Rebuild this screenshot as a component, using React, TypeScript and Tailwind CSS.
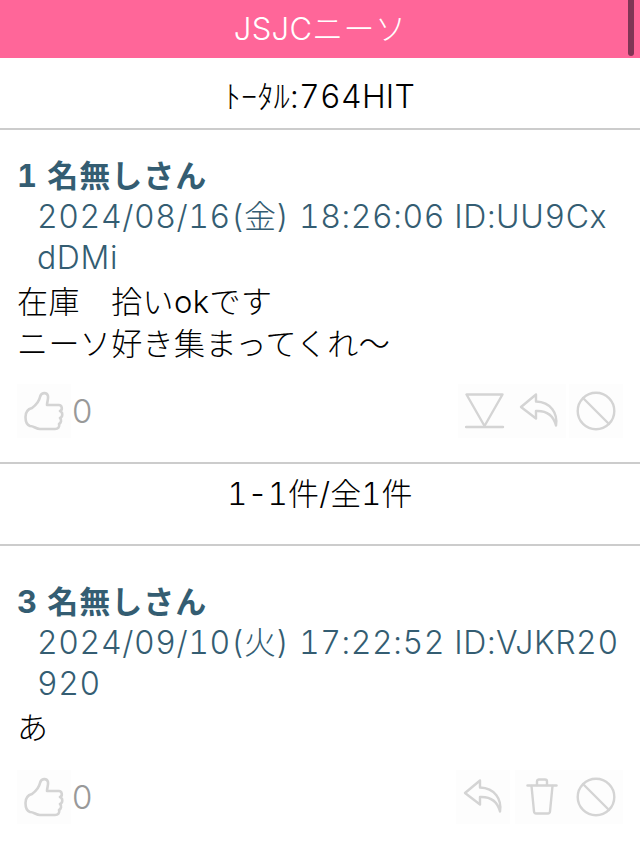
const font = { fontFamily: 'Inter, "Noto Sans CJK JP", sans-serif' };

function ThumbIcon() {
  return (
    <svg width="40" height="40" viewBox="0 0 40 40" fill="none" stroke="#d4d4d4" strokeWidth="2.6" strokeLinejoin="round" strokeLinecap="round">
      <path d="M1.500 26C1.500 21 4 18 8 17 12 14 15 11 16 6 17 1 23 1 24 5 24.500 8 23 11 23 14H35C38 14 39 19 36 20 39 21 39 26 36 27 38 29 37 32 35 33 36 36 34 38 31 38H16C12 38 10 35 6 35 3 34 1.500 30 1.500 26Z" />
    </svg>
  );
}

function DownIcon() {
  return (
    <svg width="40" height="36" viewBox="0 0 40 36" fill="none" stroke="#d4d4d4" strokeWidth="2.400" strokeLinecap="round" strokeLinejoin="round">
      <path d="M1.500 1.500h36L19.500 33z" />
      <path d="M1 34h37" />
    </svg>
  );
}

function ReplyIcon() {
  return (
    <svg width="40" height="36" viewBox="0 0 40 36" fill="none" stroke="#d4d4d4" strokeWidth="2.400" strokeLinecap="round" strokeLinejoin="round">
      <path d="M17 1.500 2 14l15 11.500V18c10-.5 17 3 20 14.500 2-12-5-23.500-20-24z" />
    </svg>
  );
}

function TrashIcon() {
  return (
    <svg width="32" height="38" viewBox="0 0 32 38" fill="none" stroke="#d4d4d4" strokeWidth="2.400" strokeLinecap="round" strokeLinejoin="round">
      <path d="M1.500 7.500h29" />
      <path d="M11 7V3.500C11 2 12 1.500 13 1.500h6c1 0 2 .5 2 2V7" />
      <path d="M5.500 8 8 33.500c.1 1.300 1 2 2.300 2h11.400c1.300 0 2.200-.7 2.300-2L26.500 8" />
    </svg>
  );
}

function BanIcon() {
  return (
    <svg width="40" height="40" viewBox="0 0 40 40" fill="none" stroke="#d4d4d4" strokeWidth="2.400" strokeLinecap="round">
      <circle cx="20" cy="20" r="18.300" />
      <path d="M7 7l26 26" />
    </svg>
  );
}

function IconBox({ children, className = '' }: { children: React.ReactNode; className?: string }) {
  return <div className={`flex h-[54px] w-[54px] items-center justify-center bg-[#fdfdfd] ${className}`}>{children}</div>;
}

function Post({ no, date, id, lines, icons, rowClass }: { no: number; date: string; id: string; lines: string[]; icons: React.ReactNode; rowClass: string }) {
  return (
    <div className="pl-[17px] pr-[17px]">
      <div className="text-[31px] font-bold leading-[40px] tracking-[1px] text-[#345d72] tabular-nums">{no} 名無しさん</div>
      <div className="break-all pl-[20px] pr-[3px] text-[32px] font-light leading-[41px] tracking-[0.6px] text-[#345d72] tabular-nums">
        {date} {id}
      </div>
      <div className="mt-[3px] text-[31px] font-light leading-[42px] tracking-[0.4px] text-black">
        {lines.map(l => <div key={l}>{l}</div>)}
      </div>
      <div className={`flex items-center justify-between ${rowClass}`}>
        <div className="flex items-center">
          <IconBox><ThumbIcon /></IconBox>
          <span className="ml-[1px] text-[33px] font-light leading-[54px] text-[#999]">0</span>
        </div>
        <div className="flex items-center">{icons}</div>
      </div>
    </div>
  );
}

export default function App() {
  return (
    <div className="relative h-[842px] w-[640px] overflow-hidden bg-white" style={font}>
      <div className="flex h-[58px] items-center justify-center bg-[#ff6699] text-[31px] font-light tracking-[0.3px] text-white">JSJCニーソ</div>
      <div className="flex h-[72px] items-center justify-center border-b-2 border-[#cccccc] pt-[8px] text-[32px] font-light tracking-[0.3px] text-black tabular-nums">ﾄｰﾀﾙ:764HIT</div>
      <div className="pt-[26px]">
        <Post
          no={1}
          date="2024/08/16(金) 18:26:06"
          id="ID:UU9CxdDMi"
          lines={['在庫　拾いokです', 'ニーソ好き集まってくれ〜']}
          rowClass="mt-[19px]"
          icons={<><IconBox><DownIcon /></IconBox><IconBox><ReplyIcon /></IconBox><IconBox className="ml-[3px]"><BanIcon /></IconBox></>}
        />
      </div>
      <div className="mt-[24px] flex h-[84px] items-center justify-center border-y-2 border-[#cccccc] pb-[20px] text-[31px] font-light tracking-[0.2px] text-black tabular-nums">1-1件/全1件</div>
      <div className="pt-[36px]">
        <Post
          no={3}
          date="2024/09/10(火) 17:22:52"
          id="ID:VJKR20920"
          lines={['あ']}
          rowClass="mt-[21px]"
          icons={<><IconBox className="mr-[5px]"><ReplyIcon /></IconBox><IconBox><TrashIcon /></IconBox><IconBox><BanIcon /></IconBox></>}
        />
      </div>
      <div className="absolute right-[6px] top-0 h-[56px] w-[6px] rounded-b-full bg-[#803555]" />
    </div>
  );
}
